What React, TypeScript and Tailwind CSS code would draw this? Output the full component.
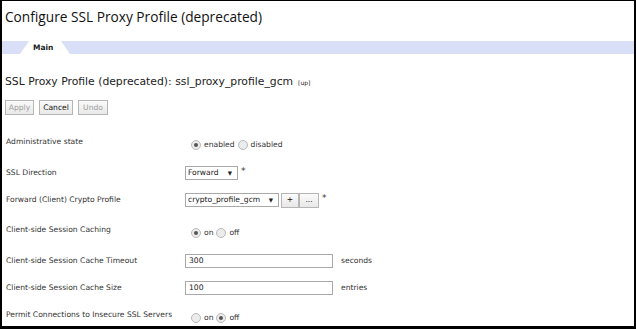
import React from 'react';

const font = { fontFamily: '"DejaVu Sans", Verdana, sans-serif' };

const Radio: React.FC<{ checked?: boolean }> = ({ checked }) => (
  <span className="inline-flex h-[10px] w-[10px] items-center justify-center rounded-full border border-[#b9b9b9] bg-[#ececec]">
    {checked && <span className="h-[4px] w-[4px] rounded-full bg-[#555]" />}
  </span>
);

const RadioPair: React.FC<{ a: string; b: string; first: boolean }> = ({ a, b, first }) => (
  <div className="flex items-center gap-[3px] pl-[6px] text-[7.6px] text-[#333]">
    <Radio checked={first} />
    <span>{a}</span>
    <Radio checked={!first} />
    <span>{b}</span>
  </div>
);

const Select: React.FC<{ value: string; width: string }> = ({ value, width }) => (
  <div className={`flex h-[14px] items-center justify-between border border-[#a9a9a9] bg-white pl-[2px] pr-[5px] text-[7.6px] text-[#222] ${width}`}>
    <span>{value}</span>
    <span className="text-[5.5px]">▼</span>
  </div>
);

const SmallBtn: React.FC<{ label: string; w: string; disabled?: boolean }> = ({ label, w, disabled }) => (
  <div
    className={`flex h-[15px] items-center justify-center border border-[#b5b5b5] bg-gradient-to-b from-[#fbfbfb] to-[#e8e8e8] text-[7.6px] ${w} ${disabled ? 'text-[#a0a0a0]' : 'text-[#111]'}`}
  >
    {label}
  </div>
);

const Row: React.FC<{ label: string; h: string; children: React.ReactNode }> = ({ label, h, children }) => (
  <div className={`flex items-center ${h}`}>
    <div className="w-[179px] shrink-0 whitespace-nowrap text-[7.6px] text-[#333]">{label}</div>
    <div className="flex items-center">{children}</div>
  </div>
);

export default function App() {
  return (
    <div className="h-[329px] w-[636px] overflow-hidden bg-black pb-[3px] pl-[2px] pr-[2px] pt-[1px]" style={font}>
      <div className="h-full w-full overflow-hidden bg-white">
        <div className="pl-[3px] pt-[6px] text-[13.7px] leading-[20px] text-[#111]" style={{ fontFamily: '"Open Sans", sans-serif' }}>
          Configure SSL Proxy Profile (deprecated)
        </div>

        <div className="mt-[14px] flex h-[13px] items-end bg-[#d8dff7]">
          <div className="ml-[18px] h-[13px] w-[50px]">
            <svg width="50" height="13" className="block">
              <polygon points="0,13 9,0 41,0 50,13" fill="#ffffff" />
            </svg>
          </div>
        </div>
        <div className="relative">
          <div className="absolute -top-[12px] left-[31px] text-[7.5px] font-bold text-[#222]">Main</div>
        </div>

        <div className="mt-[20px] flex items-baseline pl-[3px] text-[10.8px] text-[#222]">
          <span>SSL Proxy Profile (deprecated): ssl_proxy_profile_gcm</span>
          <span className="ml-[5px] text-[6px]">[up]</span>
        </div>

        <div className="mt-[10px] flex gap-[5px] pl-[3px]">
          <SmallBtn label="Apply" w="w-[29px]" disabled />
          <SmallBtn label="Cancel" w="w-[34px]" />
          <SmallBtn label="Undo" w="w-[30px]" disabled />
        </div>

        <div className="mt-[10px] pl-[4px]">
          <Row label="Administrative state" h="h-[33px]">
            <div className="pt-[6px]">
              <RadioPair a="enabled" b="disabled" first />
            </div>
          </Row>
          <Row label="SSL Direction" h="h-[29px]">
            <Select value="Forward" width="w-[53px]" />
            <span className="ml-[3px] self-start text-[9px] leading-[10px] text-[#333]">*</span>
          </Row>
          <Row label="Forward (Client) Crypto Profile" h="h-[26px]">
            <Select value="crypto_profile_gcm" width="w-[94px]" />
            <div className="ml-[2px] flex">
              <SmallBtn label="+" w="w-[18px]" />
              <SmallBtn label="..." w="w-[20px]" />
            </div>
            <span className="ml-[3px] self-start text-[9px] leading-[10px] text-[#333]">*</span>
          </Row>
          <Row label="Client-side Session Caching" h="h-[33px]">
            <div className="pt-[7px]">
              <RadioPair a="on" b="off" first />
            </div>
          </Row>
          <Row label="Client-side Session Cache Timeout" h="h-[29px]">
            <div className="flex h-[14px] w-[148px] items-center border border-[#a9a9a9] pl-[3px] text-[7.6px] text-[#222]">300</div>
            <span className="ml-[8px] text-[7.6px] text-[#333]">seconds</span>
          </Row>
          <Row label="Client-side Session Cache Size" h="h-[26px]">
            <div className="flex h-[14px] w-[148px] items-center border border-[#a9a9a9] pl-[3px] text-[7.6px] text-[#222]">100</div>
            <span className="ml-[8px] text-[7.6px] text-[#333]">entries</span>
          </Row>
          <Row label="Permit Connections to Insecure SSL Servers" h="h-[28px]">
            <div className="pt-[5px]">
              <RadioPair a="on" b="off" first={false} />
            </div>
          </Row>
        </div>
      </div>
    </div>
  );
}
